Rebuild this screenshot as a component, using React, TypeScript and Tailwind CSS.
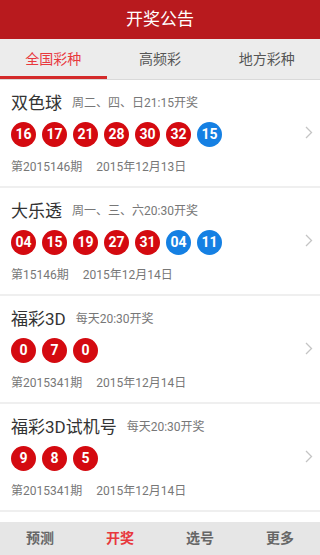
const lotteries = [
  {
    name: "双色球",
    schedule: "周二、四、日21:15开奖",
    red: ["16", "17", "21", "28", "30", "32"],
    blue: ["15"],
    issue: "第2015146期",
    date: "2015年12月13日",
  },
  {
    name: "大乐透",
    schedule: "周一、三、六20:30开奖",
    red: ["04", "15", "19", "27", "31"],
    blue: ["04", "11"],
    issue: "第15146期",
    date: "2015年12月14日",
  },
  {
    name: "福彩3D",
    schedule: "每天20:30开奖",
    red: ["0", "7", "0"],
    blue: [],
    issue: "第2015341期",
    date: "2015年12月14日",
  },
  {
    name: "福彩3D试机号",
    schedule: "每天20:30开奖",
    red: ["9", "8", "5"],
    blue: [],
    issue: "第2015341期",
    date: "2015年12月14日",
  },
];

const tabs = ["全国彩种", "高频彩", "地方彩种"];
const nav = ["预测", "开奖", "选号", "更多"];

function Ball({ n, blue }: { n: string; blue?: boolean }) {
  return (
    <span
      className={`flex h-[25px] w-[25px] items-center justify-center rounded-full text-[14px] font-bold text-white ${
        blue ? "bg-[#1580e3]" : "bg-[#d40a10]"
      }`}
    >
      {n}
    </span>
  );
}

export default function App() {
  return (
    <div
      className="flex h-[555px] w-[320px] flex-col overflow-hidden bg-white"
      style={{ fontFamily: "Roboto, 'Noto Sans CJK SC', sans-serif" }}
    >
      <header className="flex h-[39px] shrink-0 items-center justify-center bg-[#b81a1e] text-[17px] text-white">
        开奖公告
      </header>

      <div className="grid h-[41px] shrink-0 grid-cols-3 border-b border-[#d9d9d9] bg-[#ececec]">
        {tabs.map((t, i) => (
          <div
            key={t}
            className={`flex items-center justify-center text-[14px] ${
              i === 0 ? "border-b-[3px] border-[#d42a2a] pt-[3px] text-[#e8383d]" : "text-[#555]"
            }`}
          >
            {t}
          </div>
        ))}
      </div>

      <div className="flex-1 overflow-hidden">
        {lotteries.map((l) => (
          <div
            key={l.name}
            className="flex items-center border-b-2 border-[#efefef] pl-[11px] pr-[7px] pt-[11px] pb-[11px]"
          >
            <div className="flex-1">
              <div className="flex h-6 items-center">
                <span className="text-[17px] leading-6 text-[#333]">{l.name}</span>
                <span className="ml-[10px] text-[12px] text-[#777]">{l.schedule}</span>
              </div>
              <div className="mt-[7px] flex gap-[6px]">
                {l.red.map((n, i) => (
                  <Ball key={"r" + i} n={n} />
                ))}
                {l.blue.map((n, i) => (
                  <Ball key={"b" + i} n={n} blue />
                ))}
              </div>
              <div className="mt-[12px] flex text-[12px] leading-4 text-[#777]">
                <span>{l.issue}</span>
                <span className="ml-[14px]">{l.date}</span>
              </div>
            </div>
            <svg width="8" height="13" viewBox="0 0 8 13" className="mt-[-2px]">
              <path d="M1 1l5.5 5.5L1 12" fill="none" stroke="#c4c4c4" strokeWidth="1.3" />
            </svg>
          </div>
        ))}
      </div>

      <nav className="grid h-[33px] shrink-0 grid-cols-4 bg-[#e6e6e6]">
        {nav.map((n) => (
          <div
            key={n}
            className={`flex items-center justify-center text-[14px] font-bold ${
              n === "开奖" ? "text-[#e8383d]" : "text-[#666]"
            }`}
          >
            {n}
          </div>
        ))}
      </nav>
    </div>
  );
}
